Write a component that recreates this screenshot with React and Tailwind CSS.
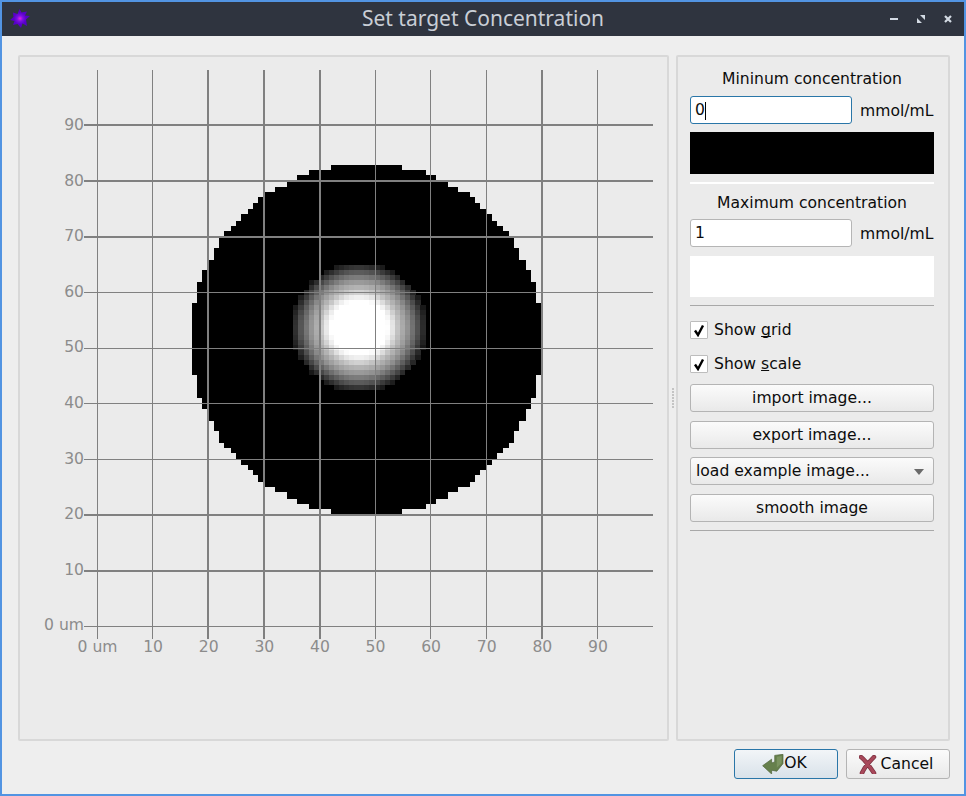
const FONT = { fontFamily: '"DejaVu Sans", sans-serif' };

// disc outline read off the picture: [top, bottom, left, right]
const DISC_ROWS = [
  [165, 170, 331, 402], [170, 175, 309, 426], [175, 180, 297, 436], [180, 187, 287, 448],
  [187, 192, 275, 458], [192, 197, 265, 470], [197, 203, 258, 475], [203, 209, 253, 480],
  [209, 214, 248, 487], [214, 221, 241, 492], [221, 226, 236, 497], [226, 231, 231, 503],
  [231, 237, 224, 509], [237, 248, 219, 514], [248, 260, 214, 519], [260, 270, 209, 526],
  [270, 282, 202, 531], [282, 303, 197, 536], [303, 375, 192, 542], [375, 398, 197, 536],
  [398, 409, 202, 531], [409, 421, 209, 526], [421, 431, 214, 519], [431, 443, 219, 514],
  [443, 448, 224, 509], [448, 453, 231, 503], [453, 459, 236, 497], [459, 465, 241, 492],
  [465, 470, 248, 487], [470, 475, 253, 480], [475, 482, 258, 475], [482, 487, 265, 470],
  [487, 492, 275, 458], [492, 499, 287, 448], [499, 504, 297, 436], [504, 509, 309, 426],
  [509, 515, 331, 402],
];

const PROFILE = [[28, 255], [33, 232], [39, 192], [44, 168], [49, 144], [54, 112], [59, 80], [64, 42], [67, 24]];

function shade(r) {
  if (r <= 28) return 255;
  if (r > 67) return 0;
  for (let i = 1; i < PROFILE.length; i++) {
    if (r <= PROFILE[i][0]) {
      const [r0, v0] = PROFILE[i - 1];
      const [r1, v1] = PROFILE[i];
      return Math.round(v0 + ((r - r0) / (r1 - r0)) * (v1 - v0));
    }
  }
  return 0;
}

const CELL_W = 5.07;
const CELL_H = 5;
const blob = [];
for (let j = 18; j < 48; j++) {
  for (let i = 18; i < 50; i++) {
    const x = 192 + i * CELL_W;
    const y = 165 + j * CELL_H;
    const v = shade(Math.hypot(x + CELL_W / 2 - 359, (y + CELL_H / 2 - 327.5) * 1.04));
    if (v > 0) blob.push({ x, y, v });
  }
}

const V_LINES = [[97, 1], [152, 1], [207, 2], [263, 2], [319, 2], [375, 1], [430, 1], [486, 1], [541, 2], [597, 1]];
const H_LINES = [[124, 2], [180, 2], [236, 2], [292, 1], [348, 1], [403, 1], [459, 1], [514, 2], [570, 2], [626, 1]];
const X_LABELS = ['0 um', '10', '20', '30', '40', '50', '60', '70', '80', '90'];
const Y_LABELS = ['90', '80', '70', '60', '50', '40', '30', '20', '10', '0 um'];

function Plot() {
  return (
    <svg width="647" height="682" viewBox="20 57 647 682" className="block" style={FONT}>
      <g shapeRendering="crispEdges">
        {DISC_ROWS.map(([t, b, l, r]) => (
          <rect key={t} x={l} y={t} width={r - l} height={b - t} fill="#000" />
        ))}
        {blob.map((c) => (
          <rect key={`${c.x}-${c.y}`} x={c.x} y={c.y} width={CELL_W + 0.5} height={CELL_H} fill={`rgb(${c.v},${c.v},${c.v})`} />
        ))}
        {V_LINES.map(([x, w]) => (
          <rect key={x} x={x} y={70} width={w} height={569} fill="#808080" />
        ))}
        {H_LINES.map(([y, h]) => (
          <rect key={y} x={84} y={y} width={569} height={h} fill="#808080" />
        ))}
      </g>
      {X_LABELS.map((t, i) => (
        <text key={t} x={97.5} dx={i * 55.6} y={652} textAnchor="middle" fontSize="15.6" fill="#8c8c8c">{t}</text>
      ))}
      {Y_LABELS.map((t, i) => (
        <text key={t} x={84} y={129.9 + i * 55.6} textAnchor="end" fontSize="15.6" fill="#8c8c8c">{t}</text>
      ))}
    </svg>
  );
}

function LogoIcon() {
  return (
    <svg width="20" height="20" viewBox="0 0 20 20" className="shrink-0">
      <defs>
        <radialGradient id="logo">
          <stop offset="0" stopColor="#e020e8" />
          <stop offset="0.3" stopColor="#7a10e0" />
          <stop offset="0.6" stopColor="#5a00cc" />
          <stop offset="1" stopColor="#5000c0" />
        </radialGradient>
      </defs>
      <path d="M9.5 0L11.5 3.5L17 2.5L15 6.5L20 7L16 10.5L17 17L12.5 14.5L11 19L7.5 15L3 16L4.5 12L0 11L3.5 8L3 3.5L7.5 5Z" fill="url(#logo)" />
    </svg>
  );
}

function WindowButtons() {
  return (
    <div className="flex items-center">
      <svg width="8" height="8" viewBox="0 0 8 8" className="mr-[19px]"><rect x="0" y="3" width="8" height="2" fill="#d3dae3" /></svg>
      <svg width="8" height="8" viewBox="0 0 8 8" className="mr-[19px]"><path d="M3 0H8V5ZM0 3L5 8H0Z" fill="#d3dae3" /></svg>
      <svg width="8" height="8" viewBox="0 0 8 8"><path d="M1 1L7 7M7 1L1 7" stroke="#d3dae3" strokeWidth="2.2" /></svg>
    </div>
  );
}

function Field({ value, focused }) {
  return (
    <div className="flex items-center">
      <div className={`w-[162px] h-[28px] bg-white rounded-[3px] border flex items-center pl-[4px] pt-[2px] text-[15.6px] ${focused ? 'border-[#2a76a8]' : 'border-[#b5b5b5]'}`}>
        {value}
        {focused && <span className="inline-block w-px h-[18px] bg-black" />}
      </div>
      <span className="ml-[8px] pt-[3px] text-[15.6px]">mmol/mL</span>
    </div>
  );
}

function Check({ children }) {
  return (
    <div className="flex items-center h-[18px] text-[15.6px] [text-decoration-skip-ink:none]">
      <div className="w-[18px] h-[18px] bg-white border border-[#bdbdbd] rounded-[1px] flex items-center justify-center">
        <svg width="12" height="13" viewBox="0 0 12 13"><path d="M2 6.5L5 11L10 1.5" fill="none" stroke="#000" strokeWidth="2.4" /></svg>
      </div>
      <span className="ml-[6px] pt-[2px]">{children}</span>
    </div>
  );
}

function PushButton({ children, className = '' }) {
  return (
    <button className={`w-[244px] h-[28px] rounded-[3px] border border-[#b4b4b4] bg-gradient-to-b from-[#fbfbfb] to-[#e9e9e9] text-[15.6px] flex items-center justify-center pt-[2px] ${className}`}>
      {children}
    </button>
  );
}

function OkIcon() {
  return (
    <svg width="22" height="20" viewBox="0 0 62 58" className="shrink-0">
      <path d="M1 34L27 15V26L36 23V4L60 1V28L42 50L27 47V58Z" fill="#66804c" stroke="#4e6339" strokeWidth="2" strokeLinejoin="round" />
      <path d="M42 8L56 6V26L42 40Z" fill="#7b9460" />
    </svg>
  );
}

function CancelIcon() {
  return (
    <svg width="18" height="19" viewBox="0 0 18 19" className="shrink-0">
      <path d="M2 2C6 5 11 12 15 18M15 2C11 6 6 11 3 18" fill="none" stroke="#7c3140" strokeWidth="4.5" strokeLinecap="round" />
      <path d="M2 2C6 5 11 12 15 18M15 2C11 6 6 11 3 18" fill="none" stroke="#a8485a" strokeWidth="3" strokeLinecap="round" />
    </svg>
  );
}

export default function App() {
  return (
    <div className="w-[966px] h-[796px] border-2 border-[#5294e2] bg-[#eeeeee] flex flex-col text-[#0c0c0c] overflow-hidden" style={FONT}>
      <div className="h-[34px] shrink-0 bg-[#2f343f] relative flex items-center justify-between pl-[8px] pr-[12px]">
        <LogoIcon />
        <span className="absolute left-0 right-0 text-center text-[21px] text-[#c9ced6]" style={{ fontFamily: '"Noto Sans", sans-serif' }}>
          Set target Concentration
        </span>
        <WindowButtons />
      </div>

      <div className="flex pl-[16px] pt-[19px]">
        <div className="w-[651px] h-[686px] bg-[#ebebeb] border-2 border-[#d8d8d8] rounded-[2px]">
          <Plot />
        </div>

        <div className="w-[7px] flex flex-col items-center justify-center gap-[1px]">
          {[0, 1, 2, 3, 4, 5, 6].map((i) => (
            <div key={i} className="w-[2px] h-[2px] bg-[#c4c4c4]" />
          ))}
        </div>

        <div className="w-[274px] h-[686px] bg-[#ebebeb] border-2 border-[#d8d8d8] rounded-[2px] pl-[12px] pr-[14px] flex flex-col">
          <div className="text-center text-[15.6px] h-[20px] leading-[20px] mt-[12px]">Mininum concentration</div>
          <div className="mt-[7px]"><Field value="0" focused /></div>
          <div className="h-[42px] bg-black mt-[8px]" />
          <div className="h-[2px] bg-white mt-[8px]" />
          <div className="text-center text-[15.6px] h-[20px] leading-[22px] mt-[8px]">Maximum concentration</div>
          <div className="mt-[7px]"><Field value="1" /></div>
          <div className="h-[41px] bg-white mt-[9px]" />
          <div className="h-px bg-[#a8a8a8] mt-[8px]" />
          <div className="mt-[15px]"><Check>Show <u>g</u>rid</Check></div>
          <div className="mt-[16px]"><Check>Show <u>s</u>cale</Check></div>
          <PushButton className="mt-[11px]">import image...</PushButton>
          <PushButton className="mt-[9px]">export image...</PushButton>
          <PushButton className="mt-[8px] !justify-between pl-[5px] pr-[9px]">
            <span>load example image...</span>
            <svg width="10" height="6" viewBox="0 0 10 6"><path d="M0 0H10L5 6Z" fill="#6a6a6a" /></svg>
          </PushButton>
          <PushButton className="mt-[9px]">smooth image</PushButton>
          <div className="h-px bg-[#a8a8a8] mt-[8px]" />
        </div>
      </div>

      <div className="flex justify-end pr-[14px] pt-[8px] gap-[8px]">
        <button className="w-[104px] h-[30px] rounded-[3px] border border-[#2a76a8] bg-gradient-to-b from-[#f2f5f8] to-[#d9e2ea] text-[15.6px] flex items-center justify-center pr-[3px]">
          <OkIcon />
          <span>OK</span>
        </button>
        <button className="w-[104px] h-[30px] rounded-[3px] border border-[#b4b4b4] bg-gradient-to-b from-[#fbfbfb] to-[#e9e9e9] text-[15.6px] flex items-center justify-center gap-[4px] pr-[4px]">
          <CancelIcon />
          <span className="pt-[2px]">Cancel</span>
        </button>
      </div>
    </div>
  );
}
